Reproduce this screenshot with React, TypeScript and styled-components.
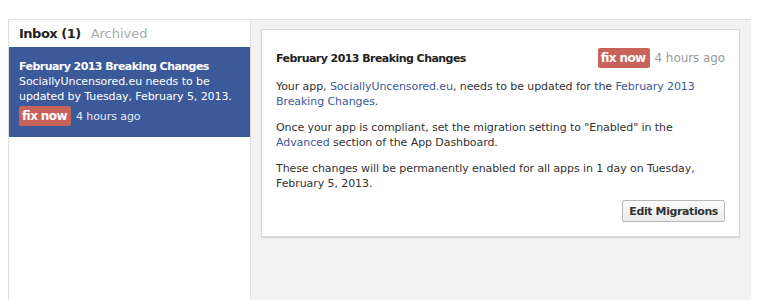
import { createGlobalStyle, styled } from "styled-components";

const GlobalStyle = createGlobalStyle`
  html, body {
    margin: 0;
    padding: 0;
    background: #ffffff;
  }
  body {
    font-family: "DejaVu Sans", "Liberation Sans", sans-serif;
    font-size: 11px;
    letter-spacing: -0.08px;
    color: #333333;
  }
`;

const App = () => {
  return (
    <>
      <GlobalStyle />
      <Page>
        <Frame>
          <Sidebar>
            <Tabs>
              <Tab $active>Inbox (1)</Tab>
              <Tab>Archived</Tab>
            </Tabs>
            <Item>
              <ItemTitle>February 2013 Breaking Changes</ItemTitle>
              <ItemText>SociallyUncensored.eu needs to be updated by Tuesday, February 5, 2013.</ItemText>
              <Meta>
                <Badge>fix now</Badge>
                <ItemTime>4 hours ago</ItemTime>
              </Meta>
            </Item>
          </Sidebar>
          <Content>
            <Card>
              <CardHead>
                <CardTitle>February 2013 Breaking Changes</CardTitle>
                <Meta>
                  <Badge>fix now</Badge>
                  <Time>4 hours ago</Time>
                </Meta>
              </CardHead>
              <Para>
                Your app, <Link>SociallyUncensored.eu</Link>, needs to be updated for the{" "}
                <Link>February 2013 Breaking Changes</Link>.
              </Para>
              <Para>
                Once your app is compliant, set the migration setting to "Enabled" in the <Link>Advanced</Link> section
                of the App Dashboard.
              </Para>
              <Para>These changes will be permanently enabled for all apps in 1 day on Tuesday, February 5, 2013.</Para>
              <Actions>
                <Button>Edit Migrations</Button>
              </Actions>
            </Card>
          </Content>
        </Frame>
      </Page>
    </>
  );
};

export default App;

const Page = styled.div`
  height: 300px;
  padding: 19px 14px 0 8px;
  box-sizing: border-box;
`;

const Frame = styled.div`
  display: flex;
  height: 100%;
  border-top: 1px solid #dddddd;
  border-left: 1px solid #dddddd;
`;

const Sidebar = styled.div`
  width: 241px;
  flex-shrink: 0;
  background: #ffffff;
  border-right: 1px solid #dddddd;
`;

const Tabs = styled.div`
  display: flex;
  gap: 10px;
  height: 27px;
  align-items: center;
  padding: 0 10px;
`;

const Tab = styled.span<{ $active?: boolean }>`
  font-size: 13px;
  font-weight: ${(p) => (p.$active ? "bold" : "normal")};
  letter-spacing: ${(p) => (p.$active ? "-0.5px" : "0")};
  color: ${(p) => (p.$active ? "#222222" : "#aaaaaa")};
`;

const Item = styled.div`
  background: #3c5a99;
  color: #ffffff;
  padding: 12px 10px 11px;
  line-height: 15px;
`;

const ItemTitle = styled.div`
  font-weight: bold;
  letter-spacing: -0.55px;
`;

const ItemText = styled.div``;

const Meta = styled.div`
  display: flex;
  align-items: center;
  gap: 5px;
  margin-top: 2px;
`;

const Badge = styled.span`
  background: #c8635c;
  color: #ffffff;
  font-weight: bold;
  font-size: 12px;
  letter-spacing: -0.6px;
  height: 20px;
  line-height: 20px;
  padding: 0 4px 0 3px;
  border-radius: 2px;
`;

const ItemTime = styled.span`
  font-size: 11px;
  color: #e6e9f2;
`;

const Content = styled.div`
  flex: 1;
  background: #f2f2f2;
  padding: 9px 11px 0 10px;
`;

const Card = styled.div`
  background: #ffffff;
  border: 1px solid #d8d8d8;
  box-shadow: 0 1px 1px rgba(0, 0, 0, 0.12);
  padding: 18px 14px 14px;
  line-height: 15px;
`;

const CardHead = styled.div`
  display: flex;
  justify-content: space-between;
  align-items: center;
  margin-bottom: 11px;

  ${Meta} {
    margin-top: 0;
  }
`;

const CardTitle = styled.div`
  font-weight: bold;
  letter-spacing: -0.55px;
  color: #222222;
`;

const Time = styled.span`
  font-size: 12px;
  color: #999999;
`;

const Para = styled.p`
  margin: 0 0 11px;
`;

const Link = styled.a`
  color: #3b5998;
  cursor: pointer;
`;

const Actions = styled.div`
  display: flex;
  justify-content: flex-end;
  margin-top: -2px;
`;

const Button = styled.button`
  font-family: inherit;
  font-size: 11px;
  font-weight: bold;
  letter-spacing: -0.4px;
  color: #333333;
  height: 22px;
  padding: 0 6px;
  background: linear-gradient(#fafafa, #ececec);
  border: 1px solid #b8b8b8;
  border-radius: 2px;
`;
